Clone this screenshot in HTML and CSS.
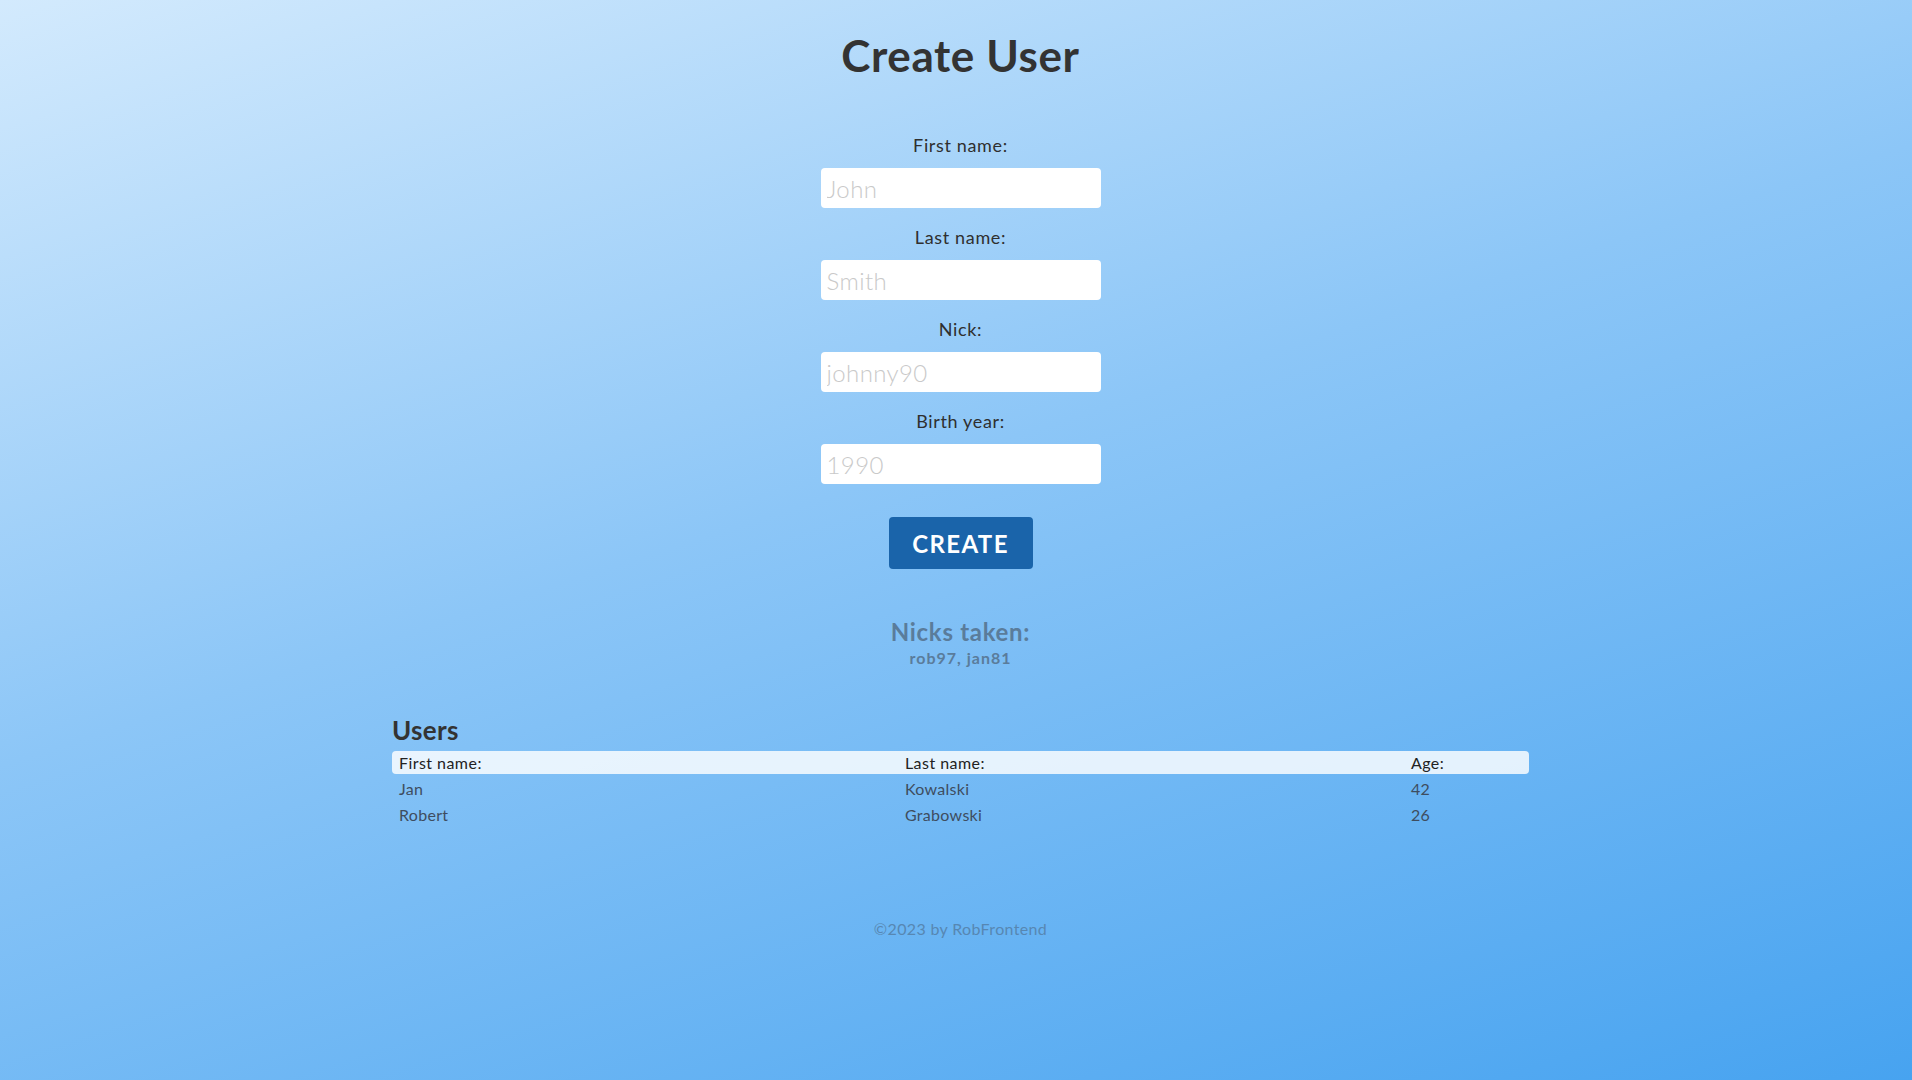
FILE: index.html
```html
<!DOCTYPE html>
<html lang="en">
<head>
<meta charset="utf-8">
<title>Create User</title>
<link rel="stylesheet" href="styles.css">
</head>
<body>
<main class="page">
  <h1 class="title">Create User</h1>
  <form class="form">
    <div class="field">
      <label class="label" for="fn">First name:</label>
      <input class="input" id="fn" type="text" placeholder="John">
    </div>
    <div class="field">
      <label class="label" for="ln">Last name:</label>
      <input class="input" id="ln" type="text" placeholder="Smith">
    </div>
    <div class="field">
      <label class="label" for="nick">Nick:</label>
      <input class="input" id="nick" type="text" placeholder="johnny90">
    </div>
    <div class="field">
      <label class="label" for="by">Birth year:</label>
      <input class="input" id="by" type="text" placeholder="1990">
    </div>
    <button class="btn" type="button">CREATE</button>
  </form>
  <section class="nicks">
    <h3 class="nicks-title">Nicks taken:</h3>
    <p class="nicks-list">rob97, jan81</p>
  </section>
  <section class="users">
    <h2 class="users-title">Users</h2>
    <table class="table">
      <thead>
        <tr><th class="c1">First name:</th><th class="c2">Last name:</th><th class="c3">Age:</th></tr>
      </thead>
      <tbody>
        <tr><td>Jan</td><td>Kowalski</td><td>42</td></tr>
        <tr><td>Robert</td><td>Grabowski</td><td>26</td></tr>
      </tbody>
    </table>
  </section>
  <footer class="footer">©2023 by RobFrontend</footer>
</main>
</body>
</html>
```
FILE: styles.css
```css
* { box-sizing: border-box; }
html, body { margin: 0; padding: 0; }
body {
  min-height: 100vh;
  background: linear-gradient(162deg, #d3eafd 0%, #8cc6f7 45%, #47a3f0 100%);
  font-family: "Lato", "Liberation Sans", sans-serif;
  color: #333;
}
.page {
  padding-left: 9px;
  display: flex;
  flex-direction: column;
  align-items: center;
  min-height: 100vh;
}
.title {
  margin: 29px 0 0;
  font-size: 44px;
  line-height: 52px;
  font-weight: 700;
  letter-spacing: 0.6px;
  color: #333;
}
.form {
  margin-top: 53px;
  display: flex;
  flex-direction: column;
  align-items: center;
}
.field {
  display: flex;
  flex-direction: column;
  align-items: center;
  margin-bottom: 18px;
}
.label {
  font-size: 18px;
  line-height: 22px;
  margin-bottom: 12px;
  letter-spacing: 0.65px;
  color: #2f2f2f;
}
.input {
  width: 280px;
  height: 40px;
  border: none;
  border-radius: 4px;
  background: #fff;
  padding: 0 6px;
  font-family: inherit;
  font-size: 24px;
  font-weight: 300;
  letter-spacing: 0.4px;
  color: #333;
  outline: none;
}
.input::placeholder { color: #c9c9c9; }
.btn {
  margin-top: 15px;
  width: 144px;
  height: 52px;
  border: none;
  border-radius: 4px;
  background: #1a64aa;
  color: #fff;
  font-family: inherit;
  font-size: 24px;
  font-weight: 700;
  letter-spacing: 1.4px;
  cursor: pointer;
}
.nicks {
  margin-top: 48px;
  text-align: center;
}
.nicks-title {
  margin: 0;
  font-size: 24px;
  line-height: 29px;
  font-weight: 700;
  letter-spacing: 0.7px;
  color: #5a7c9b;
}
.nicks-list {
  margin: 2px 0 0;
  font-size: 16px;
  line-height: 19px;
  font-weight: 700;
  letter-spacing: 1px;
  color: #5a7c9b;
}
.users {
  margin-top: 48px;
  width: 1137px;
}
.users-title {
  margin: 0 0 5px 0;
  font-size: 26px;
  line-height: 31px;
  font-weight: 700;
  letter-spacing: 0.3px;
  color: #333;
}
.table {
  width: 100%;
  border-collapse: separate;
  border-spacing: 0;
  font-size: 16px;
}
.table th {
  text-align: left;
  font-weight: 400;
  color: #222;
  background: rgba(255, 255, 255, 0.82);
  padding: 2px 7px;
  line-height: 19px;
  letter-spacing: 0.45px;
}
.table th.c1 { width: 44.5%; border-radius: 4px 0 0 4px; }
.table th.c2 { width: 44.5%; }
.table th.c3 { border-radius: 0 4px 4px 0; }
.table td {
  padding: 5px 7px 1px;
  line-height: 20px;
  color: #3e4d5f;
  font-weight: 400;
  letter-spacing: 0.3px;
}
.footer {
  margin-top: 93px;
  font-size: 16px;
  line-height: 19px;
  letter-spacing: 0.35px;
  color: #5787b2;
}
```
